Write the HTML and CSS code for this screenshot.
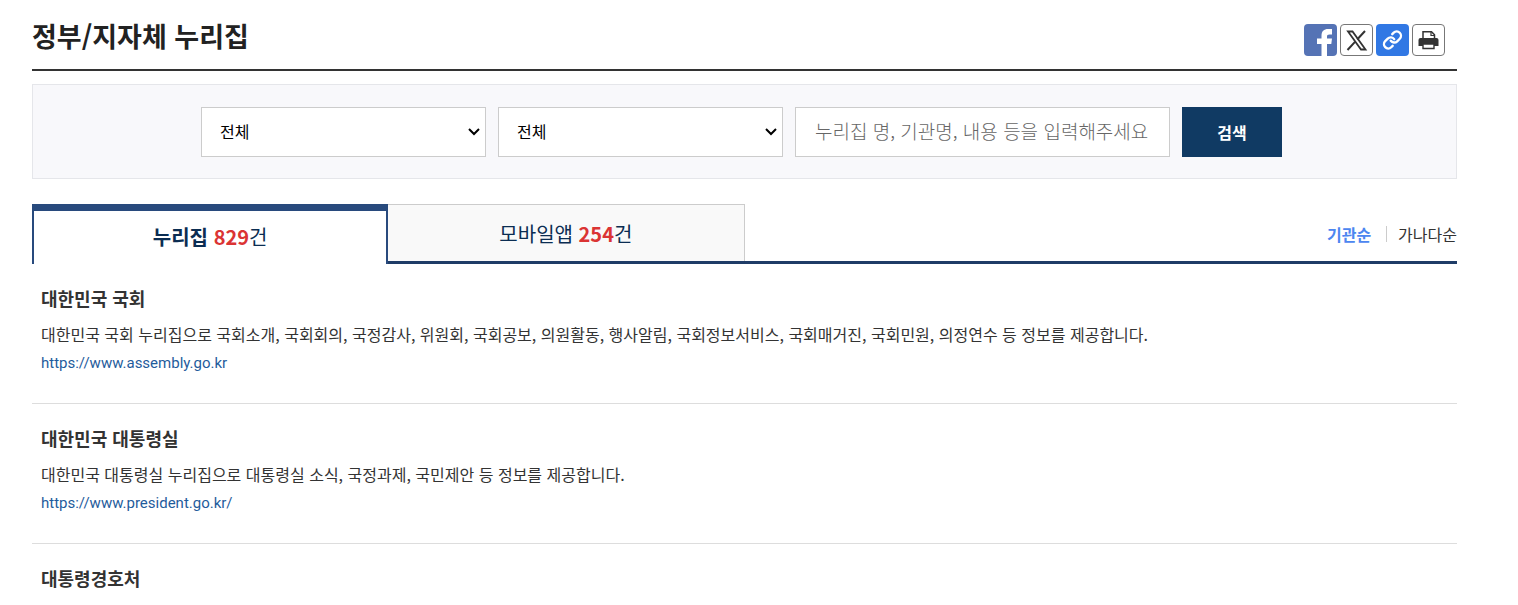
FILE: index.html
```html
<!DOCTYPE html>
<html lang="ko">
<head>
  <meta charset="UTF-8">
  <meta name="viewport" content="width=device-width, initial-scale=1.0">
  <title>정부/지자체 누리집</title>
  <link rel="stylesheet" href="styles.css">
</head>
<body>

  <div class="container">
    <header class="page-header">
      <h1>정부/지자체 누리집</h1>
      <div class="share">
        <a href="#" class="share-btn facebook" aria-label="페이스북">
          <svg viewBox="0 0 32 32"><path fill="#fff" d="M17 32V20h-4.500v-5.500H17V12C17 7 19.500 5 23.500 5H27.500v5.500h-2.500c-2 0-2.500.8-2.500 2v2h5l-.7 5.500H22.500V32z"/></svg>
        </a>
        <a href="#" class="share-btn outline" aria-label="X">
          <svg viewBox="0 0 30 30"><path fill="none" stroke="#333" stroke-width="1.800" d="M6.500 6.500h4.500L24 24.500h-4.500z"/><path fill="none" stroke="#333" stroke-width="2" d="M23.500 6l-7.800 8.500M13.500 16.800L6 25"/></svg>
        </a>
        <a href="#" class="share-btn link" aria-label="주소 복사">
          <svg viewBox="0 0 24 24"><g fill="none" stroke="#fff" stroke-width="2.800" stroke-linecap="round" stroke-linejoin="round" transform="translate(4.300 4.300) scale(.64)"><path d="M10 13a5 5 0 0 0 7.540.54l3-3a5 5 0 0 0-7.070-7.070l-1.720 1.710"/><path d="M14 11a5 5 0 0 0-7.540-.54l-3 3a5 5 0 0 0 7.070 7.070l1.710-1.710"/></g></svg>
        </a>
        <button type="button" class="share-btn outline" aria-label="인쇄">
          <svg viewBox="0 0 30 30"><path fill="#fff" stroke="#333" stroke-width="1.500" d="M9.500 14V6.800h8.500l3 3V14"/><path fill="none" stroke="#333" stroke-width="1.200" d="M17.500 7v3.500H21"/><path fill="#333" d="M7 13h16a2 2 0 0 1 2 2v6H5v-6a2 2 0 0 1 2-2z"/><path fill="#fff" stroke="#333" stroke-width="1.400" d="M9.500 19h11v4.500h-11z"/></svg>
        </button>
      </div>
    </header>

    <form class="search-form">
      <select aria-label="기관 구분">
        <option>전체</option>
      </select>
      <select aria-label="분야">
        <option>전체</option>
      </select>
      <input type="text" aria-label="검색어" placeholder="누리집 명, 기관명, 내용 등을 입력해주세요">
      <button type="submit">검색</button>
    </form>

    <div class="tab-bar">
      <a href="#" class="tab active"><span><strong>누리집</strong> <em>829</em>건</span></a>
      <a href="#" class="tab"><span>모바일앱 <em>254</em>건</span></a>
      <div class="sort">
        <a href="#" class="on">기관순</a>
        <a href="#">가나다순</a>
      </div>
    </div>

    <ul class="site-list">
      <li>
        <h2>대한민국 국회</h2>
        <p>대한민국 국회 누리집으로 국회소개, 국회회의, 국정감사, 위원회, 국회공보, 의원활동, 행사알림, 국회정보서비스, 국회매거진, 국회민원, 의정연수 등 정보를 제공합니다.</p>
        <a href="https://www.assembly.go.kr">https://www.assembly.go.kr</a>
      </li>
      <li>
        <h2>대한민국 대통령실</h2>
        <p>대한민국 대통령실 누리집으로 대통령실 소식, 국정과제, 국민제안 등 정보를 제공합니다.</p>
        <a href="https://www.president.go.kr/">https://www.president.go.kr/</a>
      </li>
      <li>
        <h2>대통령경호처</h2>
      </li>
    </ul>
  </div>

</body>
</html>
```
FILE: styles.css
```css
* {
  box-sizing: border-box;
}

body {
  margin: 0;
  background-color: #fff;
  color: #333;
  font-family: 'Noto Sans CJK KR', sans-serif;
}

a {
  color: inherit;
  text-decoration: none;
}

.container {
  margin: 0 61px 0 32px;
}

/* title + share */
.page-header {
  display: flex;
  justify-content: space-between;
  align-items: center;
  height: 71px;
  padding: 8px 12px 6px 0;
  border-bottom: 2px solid #333;
}

h1 {
  margin: 0;
  color: #222;
  font-size: 27px;
  line-height: 40px;
  font-weight: bold;
}

.share {
  display: flex;
  gap: 3px;
  padding-top: 8px;
}

.share-btn {
  display: block;
  width: 33px;
  height: 32px;
  padding: 0;
  border: none;
  border-radius: 4px;
  background: #fff;
  cursor: pointer;
}

.share-btn svg {
  display: block;
  width: 100%;
  height: 100%;
}

.share-btn.facebook {
  background: #5573b5;
}

.share-btn.link {
  background: #3178e4;
}

.share-btn.outline {
  border: 1px solid #777;
}

/* search */
.search-form {
  display: flex;
  justify-content: center;
  gap: 12px;
  margin-top: 13px;
  padding: 22px 6px 21px 0;
  border: 1px solid #e5e6ea;
  background: #f8f8fb;
}

.search-form select,
.search-form input {
  height: 50px;
  border: 1px solid #ccc;
  border-radius: 0;
  background-color: #fff;
  font-family: inherit;
}

.search-form select {
  width: 285px;
  padding: 0 30px 2px 18px;
  appearance: none;
  background-image: url("data:image/svg+xml,%3Csvg xmlns='http://www.w3.org/2000/svg' width='12' height='8'%3E%3Cpath d='M1 1l5 5 5-5' fill='none' stroke='%23000' stroke-width='2'/%3E%3C/svg%3E");
  background-repeat: no-repeat;
  background-position: right 5px center;
  color: #000;
  font-size: 16px;
}

.search-form input {
  width: 375px;
  padding: 0 19px 4px;
  font-size: 19px;
  font-weight: 300;
}

.search-form input::placeholder {
  color: #666;
}

.search-form button {
  width: 100px;
  height: 50px;
  border: none;
  background: #103a63;
  color: #fff;
  font-family: inherit;
  font-size: 16px;
  font-weight: bold;
  cursor: pointer;
}

/* tabs */
.tab-bar {
  display: flex;
  height: 60px;
  margin-top: 25px;
  background: linear-gradient(#1f3c67, #1f3c67) bottom / 100% 3px no-repeat;
}

.tab {
  display: flex;
  justify-content: center;
  align-items: center;
  width: 25%;
  height: 57px;
  border: 1px solid #ccc;
  border-width: 1px 1px 0 0;
  background: #f9f9f9;
  color: #0b2d52;
  font-size: 20px;
}

.tab.active {
  height: 60px;
  padding-bottom: 2px;
  border: 2px solid #284a7d;
  border-width: 7px 2px 0 2px;
  background: #fff;
}

.tab em {
  color: #db3434;
  font-style: normal;
  font-weight: bold;
}

.sort {
  display: flex;
  align-items: center;
  margin-left: auto;
  font-size: 16px;
  line-height: 16px;
}

.sort .on {
  margin-right: 15px;
  color: #4c86f0;
  font-weight: bold;
}

.sort a + a {
  padding-left: 11px;
  border-left: 1px solid #ccc;
}

/* list */
.site-list {
  margin: 0;
  padding: 0;
  list-style: none;
}

.site-list li {
  padding: 20px 9px 25px;
  border-bottom: 1px solid #ddd;
  line-height: 28px;
}

.site-list li:last-child {
  padding-bottom: 0;
  border-bottom: none;
}

.site-list h2 {
  margin: 0 0 8px;
  font-size: 18px;
  font-weight: bold;
}

.site-list li:last-child h2 {
  margin-bottom: 0;
}

.site-list p {
  margin: 0;
  font-size: 16px;
}

.site-list a {
  display: block;
  color: #1f5c9c;
  font-family: Roboto, sans-serif;
  font-size: 15px;
  line-height: 30px;
}
```
